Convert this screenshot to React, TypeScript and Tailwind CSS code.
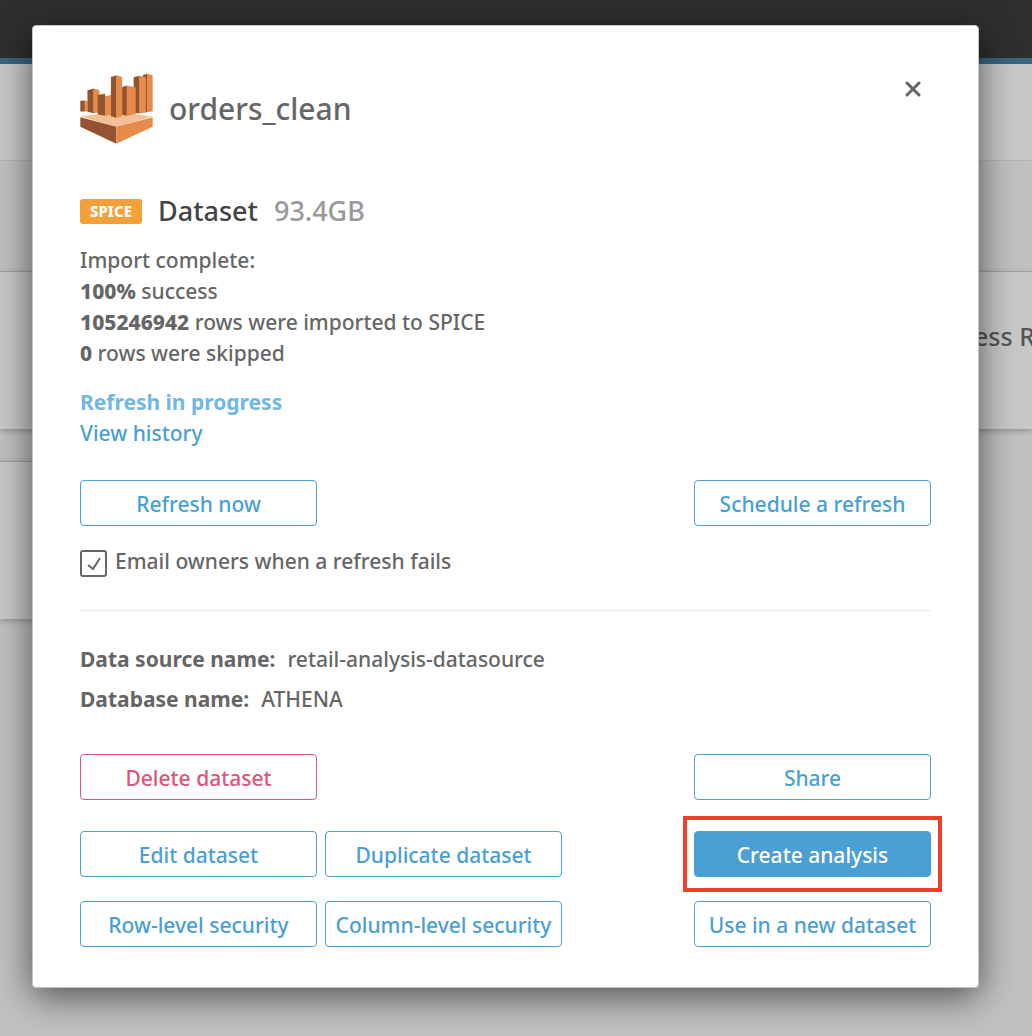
import { useState } from 'react';
import type { ReactNode } from 'react';
import clsx from 'clsx';

type ButtonVariant = 'outline' | 'danger' | 'primary';

const BUTTON_STYLES: Record<ButtonVariant, string> = {
  outline: 'border-[#4a9fd4] bg-white text-[#4a9fd4]',
  danger: 'border-[#dc5677] bg-white text-[#dc5677]',
  primary: 'border-[#4a9fd4] bg-[#4a9fd4] text-white',
};

function ActionButton({ variant = 'outline', children }: { variant?: ButtonVariant; children: ReactNode }) {
  return (
    <button
      type="button"
      className={clsx(
        'h-[46px] w-[237px] rounded-[4px] border pt-0.5 text-[21px] leading-[31px] font-medium whitespace-nowrap',
        BUTTON_STYLES[variant],
      )}
    >
      {children}
    </button>
  );
}

function QuickSightLogo() {
  return (
    <svg viewBox="17 16 215 214" className="h-[71px] w-[73px]" preserveAspectRatio="none" aria-hidden="true">
      <path fill="#f3bf96" d="M18 146 124 134 231 146 124 179z" />
      <path fill="#95532f" d="M18 149 124 178V229L18 178z" />
      <path fill="#e78b49" d="M231 149 124 178V229L231 178z" />
      <path fill="#95532f" d="M216 18 202 22V134H216z" />
      <path fill="#e78b49" d="M216 18 231 23V131L216 134zM192 24 211 29V134L192 138z" />
      <path fill="#95532f" d="M192 24 175 29V136L192 138z" />
      <path fill="#e78b49" d="M155 54 181 60V140L155 145zM57 63 74 67V134L57 137zM31 99 39 101V131L31 132z" />
      <path fill="#95532f" d="M155 54 141 58V142L155 145zM57 63 39 68V133L57 137zM31 99 18 100V132L31 132z" />
      <path fill="#e78b49" d="M91 78 69 82 91 86 108 82V142L91 145z" />
      <path fill="#95532f" d="M91 80 69 82V141L91 145z" />
      <path fill="#e78b49" d="M124 23 141 28V146L124 151z" />
      <path fill="#95532f" d="M124 23 108 28V146L124 151z" />
    </svg>
  );
}

function PageBackdrop() {
  return (
    <div className="min-h-screen overflow-hidden bg-[#c1c1c1]">
      <header className="h-16 border-b-[6px] border-[#3b6580] bg-[#2f2f2f]" />
      <div className="h-[97px] border-b border-[#b5b5b5] bg-[#c8c8c8]" />
      <div className="grid grid-cols-2 gap-x-4 gap-y-8 pt-[110px]">
        <div className="h-[158px] border-t border-[#a0a0a0] bg-[#c8c8c8] shadow-[0_2px_6px_rgba(0,0,0,0.25)]" />
        <div className="h-[158px] overflow-hidden border-t border-[#a0a0a0] bg-[#c8c8c8] pt-12 pl-[450px] text-[25px] leading-8 font-medium whitespace-nowrap text-[#555555] shadow-[0_2px_6px_rgba(0,0,0,0.25)]">
          ess R
        </div>
        <div className="h-[158px] border-t border-[#a0a0a0] bg-[#c8c8c8] shadow-[0_2px_6px_rgba(0,0,0,0.25)]" />
      </div>
    </div>
  );
}

function DatasetDialog() {
  const [emailOwners, setEmailOwners] = useState(true);

  return (
    <div
      role="dialog"
      aria-labelledby="dataset-title"
      className="w-full rounded-[4px] border border-[#c4c4c4] bg-white px-[47px] pt-[47px] pb-10 text-[21px] leading-[31px] font-medium text-[#666666] shadow-[0_8px_36px_rgba(0,0,0,0.6)]"
    >
      <div className="flex items-start">
        <QuickSightLogo />
        <h1 id="dataset-title" className="mt-4 ml-4 text-[30px] leading-10 font-medium">
          orders_clean
        </h1>
        <button type="button" aria-label="Close" className="mt-2 mr-[10px] ml-auto">
          <svg viewBox="0 0 16 16" className="size-4" fill="none" stroke="#666666" strokeWidth="3" strokeLinecap="round">
            <path d="M2 2 14 14M14 2 2 14" />
          </svg>
        </button>
      </div>

      <div className="mt-[51px] flex h-8 items-center">
        <span className="flex h-[25px] w-[62px] items-center justify-center rounded-[3px] bg-[#f49f38] text-[15px] font-extrabold text-white">
          SPICE
        </span>
        <h2 className="ml-4 text-[27px] leading-8 font-medium text-[#444444]">Dataset</h2>
        <span className="ml-4 text-[27px] leading-8 text-[#999999]">93.4GB</span>
      </div>

      <div className="mt-[18px]">
        <p>Import complete:</p>
        <p>
          <b className="font-extrabold">100%</b> success
        </p>
        <p>
          <b className="font-extrabold">105246942</b> rows were imported to SPICE
        </p>
        <p>
          <b className="font-extrabold">0</b> rows were skipped
        </p>
      </div>

      <div className="mt-[18px]">
        <p className="font-bold text-[#73b8e2]">Refresh in progress</p>
        <a href="#history" className="block w-fit text-[#4a9fd4]">
          View history
        </a>
      </div>

      <div className="mt-[31px] flex justify-between">
        <ActionButton>Refresh now</ActionButton>
        <ActionButton>Schedule a refresh</ActionButton>
      </div>

      <div className="mt-[23px] flex h-7 items-center gap-2">
        <span className="grid size-[27px] shrink-0">
          <input
            id="email-owners"
            type="checkbox"
            checked={emailOwners}
            onChange={(event) => setEmailOwners(event.target.checked)}
            className="col-start-1 row-start-1 appearance-none rounded-[3px] border-2 border-[#666666]"
          />
          {emailOwners && (
            <svg viewBox="0 0 27 27" className="pointer-events-none col-start-1 row-start-1" fill="none" stroke="#666666" strokeWidth="2">
              <path d="M8 15 13 19 20 8" />
            </svg>
          )}
        </span>
        <label htmlFor="email-owners" className="pb-1">
          Email owners when a refresh fails
        </label>
      </div>

      <hr className="mt-[33px] border-[#eaeaea]" />

      <dl className="mt-[33px] flex flex-col gap-[9px]">
        <div className="flex gap-3">
          <dt className="font-bold">Data source name:</dt>
          <dd>retail-analysis-datasource</dd>
        </div>
        <div className="flex gap-3">
          <dt className="font-bold">Database name:</dt>
          <dd>ATHENA</dd>
        </div>
      </dl>

      <div className="mt-[39px] flex justify-between">
        <ActionButton variant="danger">Delete dataset</ActionButton>
        <ActionButton>Share</ActionButton>
      </div>

      <div className="mt-[31px] flex gap-2">
        <ActionButton>Edit dataset</ActionButton>
        <ActionButton>Duplicate dataset</ActionButton>
        <div className="relative ml-auto">
          <ActionButton variant="primary">Create analysis</ActionButton>
          <div className="pointer-events-none absolute -inset-x-[11px] -inset-y-[15px] border-4 border-[#ee4027]" />
        </div>
      </div>

      <div className="mt-6 flex gap-2">
        <ActionButton>Row-level security</ActionButton>
        <ActionButton>Column-level security</ActionButton>
        <div className="ml-auto">
          <ActionButton>Use in a new dataset</ActionButton>
        </div>
      </div>
    </div>
  );
}

export default function App() {
  return (
    <div className="relative font-['Noto_Sans',sans-serif]">
      <PageBackdrop />
      <div className="absolute inset-x-0 top-0 pt-[25px] pr-[53px] pb-12 pl-8">
        <DatasetDialog />
      </div>
    </div>
  );
}
